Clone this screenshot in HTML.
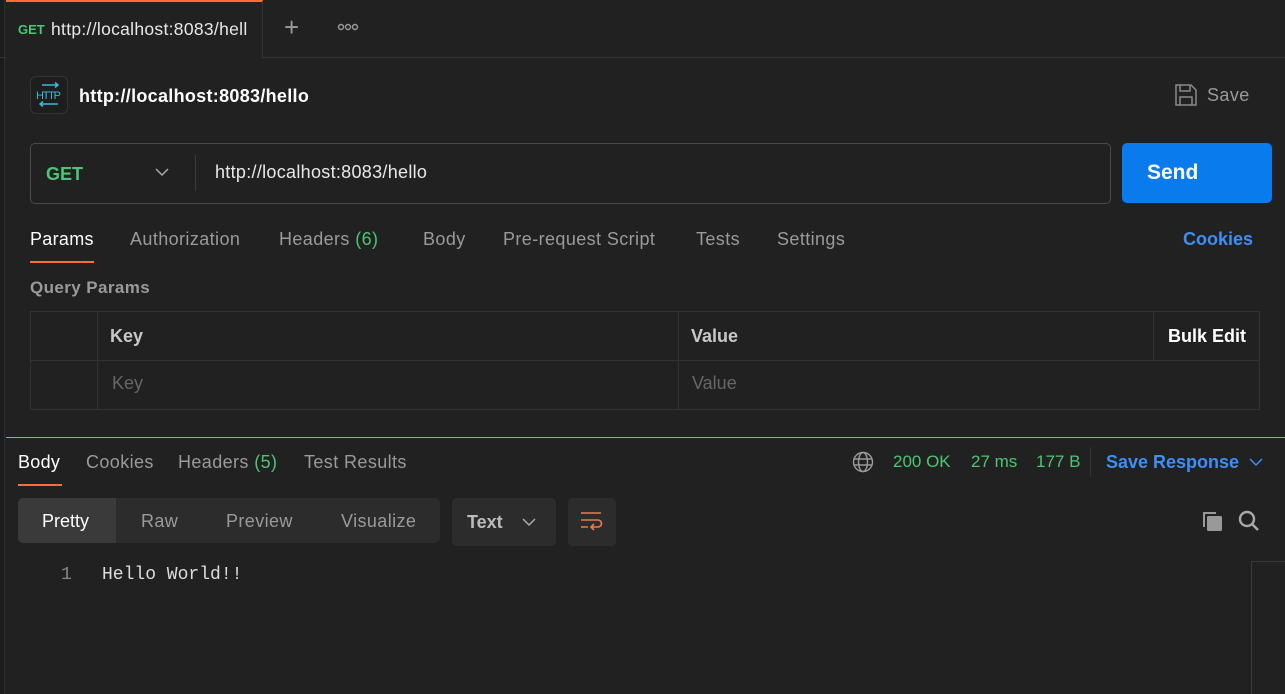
<!DOCTYPE html>
<html><head><meta charset="utf-8"><style>
*{margin:0;padding:0;box-sizing:border-box}
body{width:1285px;height:694px;background:#212121;font-family:"Liberation Sans",sans-serif;color:#ffffff;position:relative;overflow:hidden;font-size:18px}
.a{position:absolute}
.g{color:#9a9a9a;letter-spacing:0.4px}
.green{color:#49c774}
</style></head><body>
<div class="a" style="left:0;top:0;width:5px;height:694px;background:#1c1c1c;border-right:1px solid #2e2e2e"></div>
<div class="a" style="left:0;top:0;width:1285px;height:58px;border-bottom:1px solid #333"></div>
<div class="a" style="left:6px;top:0;width:257px;height:59px;background:#212121;border-top:2px solid #ff6c37;border-right:1px solid #333"></div>
<div class="a" style="left:18px;top:22px;font-size:13px;font-weight:bold;color:#49c774">GET</div>
<div class="a" style="left:51px;top:19px;font-size:17.5px;letter-spacing:0.3px;color:#e8e8e8;width:197px;overflow:hidden;white-space:nowrap">http://localhost:8083/hello</div>
<div class="a" style="left:284px;top:12px;font-size:26px;color:#9a9a9a;font-weight:300">+</div>
<svg class="a" style="left:337px;top:23px" width="22" height="8" viewBox="0 0 22 8" fill="none" stroke="#9a9a9a" stroke-width="1.4"><circle cx="4" cy="4" r="2.5"/><circle cx="11" cy="4" r="2.5"/><circle cx="18" cy="4" r="2.5"/></svg>

<div class="a" style="left:30px;top:76px;width:38px;height:38px;border:1px solid #333;border-radius:6px;background:#1e1e1e"></div>
<svg class="a" style="left:34px;top:80px" width="30" height="30" viewBox="0 0 30 30"><path d="M8 5h16M21 2.5l3 2.5-3 2.5M24 24H6M9 21.5l-3 2.5 3 2.5" stroke="#3fb8d4" stroke-width="1.5" fill="none"/><text x="2" y="19" font-size="11" fill="#3fb8d4" font-family="Liberation Sans" textLength="25">HTTP</text></svg>
<div class="a" style="left:79px;top:86px;font-size:18px;font-weight:bold;letter-spacing:0.3px">http://localhost:8083/hello</div>
<svg class="a" style="left:1175px;top:84px" width="22" height="22" viewBox="0 0 22 22" fill="none" stroke="#8a8a8a" stroke-width="1.5"><path d="M1 1h15l5 5v15H1z"/><path d="M5 1v6h10V1M5 21v-8h12v8"/></svg>
<div class="a g" style="left:1207px;top:85px;font-size:18px">Save</div>

<div class="a" style="left:30px;top:143px;width:1081px;height:61px;border:1px solid #4a4a4a;border-radius:5px"></div>
<div class="a" style="left:46px;top:164px;font-size:18px;font-weight:bold;color:#49c774">GET</div>
<svg class="a" style="left:155px;top:167px" width="14" height="10" viewBox="0 0 14 10"><path d="M1 2l6 6 6-6" stroke="#aaa" stroke-width="1.5" fill="none"/></svg>
<div class="a" style="left:195px;top:155px;width:1px;height:36px;background:#3a3a3a"></div>
<div class="a" style="left:215px;top:162px;font-size:18px;color:#e8e8e8;letter-spacing:0.3px">http://localhost:8083/hello</div>
<div class="a" style="left:1122px;top:143px;width:150px;height:60px;background:#097bed;border-radius:5px"></div>
<div class="a" style="left:1147px;top:161px;font-size:21px;font-weight:bold">Send</div>

<div class="a" style="left:30px;top:229px;font-size:18px;letter-spacing:0.3px">Params</div>
<div class="a" style="left:30px;top:261px;width:64px;height:2px;background:#ff6c37"></div>
<div class="a g" style="left:130px;top:229px">Authorization</div>
<div class="a g" style="left:279px;top:229px">Headers <span class="green">(6)</span></div>
<div class="a g" style="left:423px;top:229px">Body</div>
<div class="a g" style="left:503px;top:229px">Pre-request Script</div>
<div class="a g" style="left:696px;top:229px">Tests</div>
<div class="a g" style="left:777px;top:229px">Settings</div>
<div class="a" style="left:1183px;top:229px;color:#3d8ef5;font-weight:bold">Cookies</div>

<div class="a g" style="left:30px;top:278px;font-size:17px;font-weight:bold">Query Params</div>
<div class="a" style="left:30px;top:311px;width:1230px;height:99px;border:1px solid #333"></div>
<div class="a" style="left:30px;top:360px;width:1230px;height:1px;background:#333"></div>
<div class="a" style="left:97px;top:311px;width:1px;height:99px;background:#333"></div>
<div class="a" style="left:678px;top:311px;width:1px;height:99px;background:#333"></div>
<div class="a" style="left:1153px;top:311px;width:1px;height:49px;background:#333"></div>
<div class="a" style="left:110px;top:326px;font-weight:bold;color:#c8c8c8">Key</div>
<div class="a" style="left:691px;top:326px;font-weight:bold;color:#c8c8c8">Value</div>
<div class="a" style="left:1168px;top:326px;font-weight:bold">Bulk Edit</div>
<div class="a" style="left:112px;top:373px;color:#666">Key</div>
<div class="a" style="left:692px;top:373px;color:#666">Value</div>

<div class="a" style="left:6px;top:437px;width:1279px;height:1px;background:#8aa4c4"></div>
<div class="a" style="left:18px;top:452px;letter-spacing:0.3px">Body</div>
<div class="a" style="left:18px;top:484px;width:44px;height:2px;background:#ff6c37"></div>
<div class="a g" style="left:86px;top:452px">Cookies</div>
<div class="a g" style="left:178px;top:452px">Headers <span class="green">(5)</span></div>
<div class="a g" style="left:304px;top:452px">Test Results</div>
<svg class="a" style="left:852px;top:451px" width="22" height="22" viewBox="0 0 22 22" fill="none" stroke="#999" stroke-width="1.4"><circle cx="11" cy="11" r="9.5"/><ellipse cx="11" cy="11" rx="4.5" ry="9.5"/><path d="M2 8h18M2 14h18"/></svg>
<div class="a green" style="left:893px;top:452px;font-size:17px">200 OK</div>
<div class="a green" style="left:971px;top:452px;font-size:17px">27 ms</div>
<div class="a green" style="left:1036px;top:452px;font-size:17px">177 B</div>
<div class="a" style="left:1090px;top:447px;width:1px;height:30px;background:#333"></div>
<div class="a" style="left:1106px;top:452px;color:#3d8ef5;font-weight:bold">Save Response</div>
<svg class="a" style="left:1249px;top:457px" width="14" height="10" viewBox="0 0 14 10"><path d="M1 2l6 6 6-6" stroke="#3d8ef5" stroke-width="1.5" fill="none"/></svg>

<div class="a" style="left:18px;top:498px;width:422px;height:45px;background:#2c2c2c;border-radius:5px"></div>
<div class="a" style="left:18px;top:498px;width:98px;height:45px;background:#3a3a3a;border-radius:5px 0 0 5px"></div>
<div class="a" style="left:42px;top:511px">Pretty</div>
<div class="a g" style="left:141px;top:511px">Raw</div>
<div class="a g" style="left:226px;top:511px">Preview</div>
<div class="a g" style="left:341px;top:511px">Visualize</div>
<div class="a" style="left:452px;top:498px;width:104px;height:48px;background:#2c2c2c;border-radius:5px"></div>
<div class="a" style="left:467px;top:512px;font-weight:bold;color:#bbb">Text</div>
<svg class="a" style="left:522px;top:517px" width="14" height="10" viewBox="0 0 14 10"><path d="M1 2l6 6 6-6" stroke="#aaa" stroke-width="1.5" fill="none"/></svg>
<div class="a" style="left:568px;top:498px;width:48px;height:48px;background:#2c2c2c;border-radius:5px"></div>
<svg class="a" style="left:580px;top:511px" width="24" height="22" viewBox="0 0 24 22" fill="none" stroke="#ef7a4b" stroke-width="1.6"><path d="M1 2h20M1 9h17a3.5 3.5 0 0 1 0 7h-6M14 13l-3 3 3 3M1 16h7"/></svg>
<svg class="a" style="left:1200px;top:509px" width="24" height="24" viewBox="0 0 24 24"><path d="M3 3h13v2H5v13H3z" fill="#999"/><rect x="7" y="7" width="15" height="15" rx="1.5" fill="#999"/></svg>
<svg class="a" style="left:1237px;top:509px" width="24" height="24" viewBox="0 0 24 24" fill="none" stroke="#aaa" stroke-width="2.4"><circle cx="10" cy="10" r="7"/><path d="M15 15l6 6"/></svg>
<div class="a" style="left:61px;top:565px;font-family:'Liberation Mono',monospace;font-size:18px;color:#888">1</div>
<div class="a" style="left:102px;top:565px;font-family:'Liberation Mono',monospace;font-size:18px;color:#ddd">Hello World!!</div>
<div class="a" style="left:1251px;top:561px;width:34px;height:133px;border-left:1px solid #3a3a3a;border-top:1px solid #3a3a3a"></div>
</body></html>
